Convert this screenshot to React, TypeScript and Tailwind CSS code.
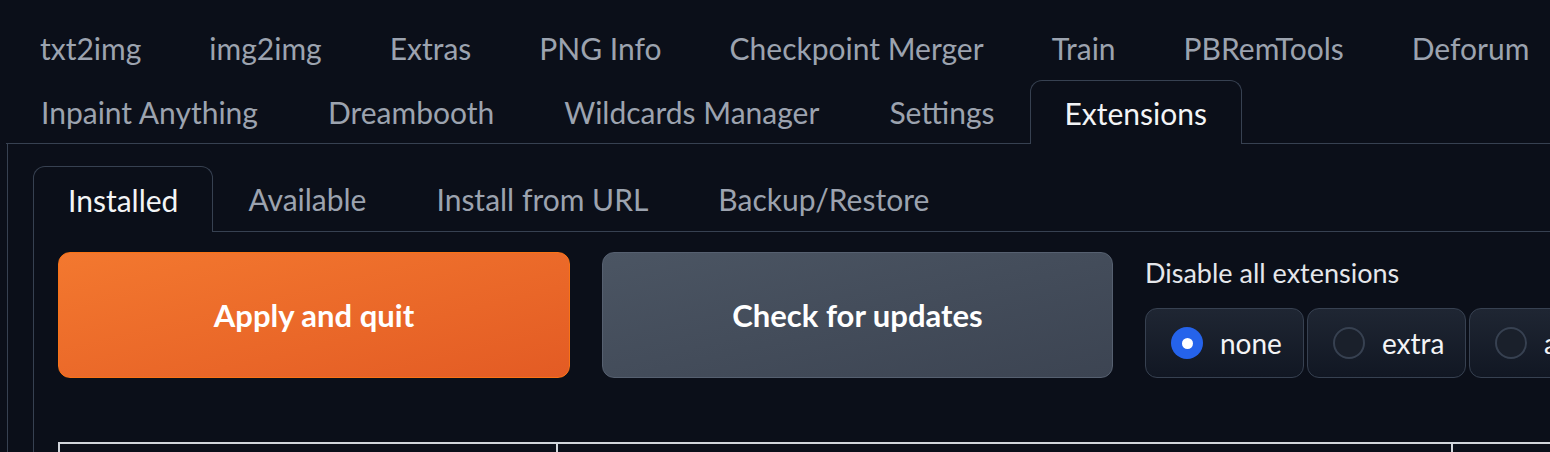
import { useState } from "react";

const topRow1 = ["txt2img", "img2img", "Extras", "PNG Info", "Checkpoint Merger", "Train", "PBRemTools", "Deforum"];
const topRow2 = ["Inpaint Anything", "Dreambooth", "Wildcards Manager", "Settings", "Extensions"];
const subTabs = ["Installed", "Available", "Install from URL", "Backup/Restore"];
const radioOpts = ["none", "extra", "all"];

export default function App() {
    const [tab] = useState("Extensions");
    const [sub] = useState("Installed");
    const [disable, setDisable] = useState("none");

    return (
        <div className="w-[1550px] h-[452px] overflow-hidden bg-[#0b0f19] font-['Lato','Liberation_Sans',sans-serif]">
            <div className="pt-4 pl-[6px] w-[1700px]">
                {/* top tab nav, two rows as wrapped in the original */}
                <div className="flex h-16 items-center">
                    {topRow1.map((t) => (
                        <button key={t} className="px-[34px] text-[30px] leading-none text-[#9ca3af] whitespace-nowrap">
                            {t}
                        </button>
                    ))}
                </div>
                <div className="flex h-16 items-stretch border-b border-[#374151]">
                    {topRow2.map((t) =>
                        t === tab ? (
                            <button
                                key={t}
                                className="px-[34px] text-[30px] leading-none text-[#f3f4f6] whitespace-nowrap border border-b-0 border-[#374151] rounded-t-xl bg-[#0b0f19] -mb-px"
                            >
                                {t}
                            </button>
                        ) : (
                            <button key={t} className="px-[34px] text-[30px] leading-none text-[#9ca3af] whitespace-nowrap border border-transparent">
                                {t}
                            </button>
                        )
                    )}
                </div>

                {/* Extensions panel */}
                <div className="ml-px border-l border-[#374151] pl-[25px] pt-[22px]">
                    <div className="flex h-[66px] items-stretch border-b border-[#374151]">
                        {subTabs.map((t) =>
                            t === sub ? (
                                <button
                                    key={t}
                                    className="px-[34px] text-[30px] leading-none text-[#f3f4f6] whitespace-nowrap border border-b-0 border-[#374151] rounded-t-xl bg-[#0b0f19] -mb-px"
                                >
                                    {t}
                                </button>
                            ) : (
                                <button key={t} className="px-[34px] text-[30px] leading-none text-[#9ca3af] whitespace-nowrap border border-transparent">
                                    {t}
                                </button>
                            )
                        )}
                    </div>

                    <div className="border-l border-[#374151] pl-6 pt-5">
                        <div className="flex gap-8 items-start">
                            <button className="w-[512px] h-[126px] rounded-xl border border-[#f97316] bg-gradient-to-br from-[#f3782f] to-[#e35b24] text-white text-[31px] font-bold">
                                Apply and quit
                            </button>
                            <button className="w-[511px] h-[126px] rounded-xl border border-[#566070] bg-gradient-to-br from-[#4b5563] to-[#3c4452] text-white text-[31px] font-bold">
                                Check for updates
                            </button>
                            <div className="flex flex-col">
                                <div className="h-[45px] pt-[7px] text-[27px] leading-none text-[#e5e7eb] whitespace-nowrap">
                                    Disable all extensions
                                </div>
                                <div className="flex gap-[3px] mt-[11px]">
                                    {radioOpts.map((o) => (
                                        <label
                                            key={o}
                                            onClick={() => setDisable(o)}
                                            className="w-[159px] h-[70px] flex items-center gap-[17px] px-[25px] rounded-xl border border-[#374151] bg-gradient-to-b from-[#1f2633] to-[#111723] cursor-pointer"
                                        >
                                            {disable === o ? (
                                                <span className="w-8 h-8 shrink-0 rounded-full bg-[#2563eb] flex items-center justify-center">
                                                    <span className="w-[11px] h-[11px] rounded-full bg-white" />
                                                </span>
                                            ) : (
                                                <span className="w-8 h-8 shrink-0 rounded-full border-2 border-[#374151] bg-[#1a202b]" />
                                            )}
                                            <span className="text-[28px] leading-none text-[#f3f4f6]">{o}</span>
                                        </label>
                                    ))}
                                </div>
                            </div>
                        </div>

                        {/* extensions table top edge */}
                        <div className="mt-[64px] w-[1600px] h-20 border-t-2 border-l-2 border-[#d1d5db] flex">
                            <div className="w-[498px] border-r-2 border-[#d1d5db]" />
                            <div className="w-[895px] border-r-2 border-[#d1d5db]" />
                        </div>
                    </div>
                </div>
            </div>
        </div>
    );
}
